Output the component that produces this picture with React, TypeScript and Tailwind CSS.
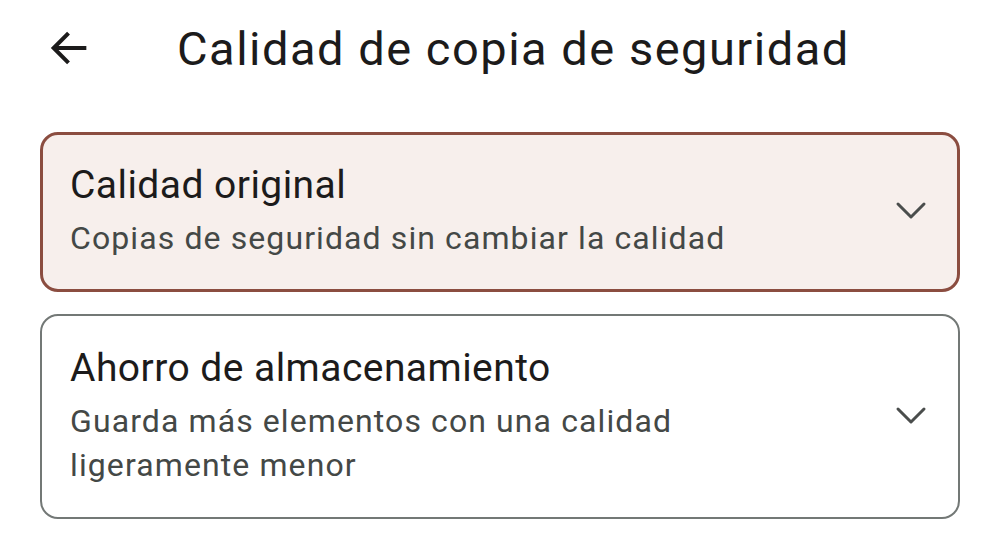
import React from "react";

function Chevron() {
  return (
    <svg width="32" height="20" viewBox="0 0 32 20" fill="none" className="shrink-0">
      <path d="M3 3 L16 16 L29 3" stroke="#4a4d4c" strokeWidth="3" strokeLinecap="round" strokeLinejoin="round" />
    </svg>
  );
}

function Card({ title, lines, selected }: { title: string; lines: string[]; selected?: boolean }) {
  return (
    <div
      className={
        selected
          ? "flex items-center rounded-[18px] border-[3px] border-[#8b4d40] bg-[#f7efec] pl-[27px] pr-[30px] pt-[26px] pb-[29px]"
          : "flex items-center rounded-[18px] border-2 border-[#737876] bg-white pl-[28px] pr-[31px] pt-[28px] pb-[30px]"
      }
    >
      <div className="flex-1">
        <div className="text-[39px] leading-[48px] text-[#1c1b1b] tracking-[0.45px]">{title}</div>
        <div className="mt-[7px] text-[32px] leading-[44px] text-[#444846] tracking-[1.1px]">
          {lines.map((l, i) => (
            <div key={i}>{l}</div>
          ))}
        </div>
      </div>
      <Chevron />
    </div>
  );
}

export default function App() {
  return (
    <div className="w-[1000px] h-[537px] bg-white overflow-hidden" style={{ fontFamily: "Roboto, 'Noto Sans', sans-serif" }}>
      <div className="flex items-center h-[96px] pl-[46px]">
        <svg width="46" height="46" viewBox="0 0 24 24" fill="none">
          <path d="M20 12 H4.5 M11 5 L4 12 L11 19" stroke="#1c1b1b" strokeWidth="2.1" strokeLinecap="square" />
        </svg>
        <div className="ml-[85px] text-[47px] text-[#1c1b1b] leading-none tracking-[1.5px]">Calidad de copia de seguridad</div>
      </div>
      <div className="flex flex-col gap-[22px] px-[40px] pt-[36px]">
        <Card selected title="Calidad original" lines={["Copias de seguridad sin cambiar la calidad"]} />
        <Card title="Ahorro de almacenamiento" lines={["Guarda más elementos con una calidad", "ligeramente menor"]} />
      </div>
    </div>
  );
}
